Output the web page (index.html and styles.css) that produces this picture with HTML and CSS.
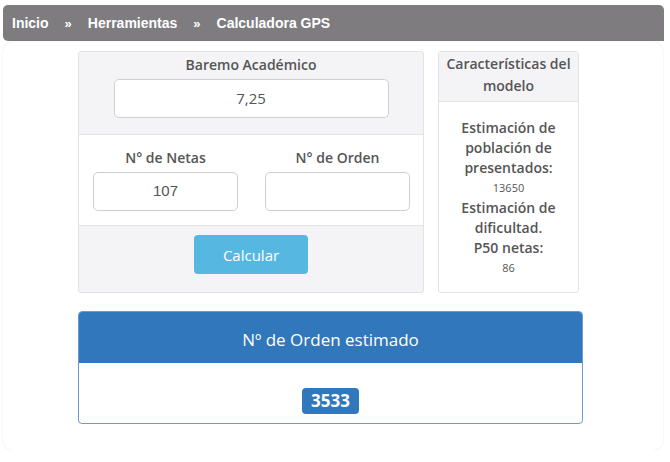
FILE: index.html
```html
<!DOCTYPE html>
<html lang="es">
<head>
<meta charset="utf-8">
<title>Calculadora GPS</title>
<link rel="stylesheet" href="styles.css">
</head>
<body>
<nav class="breadcrumb">
  <span class="crumb">Inicio</span>
  <span class="sep">»</span>
  <span class="crumb">Herramientas</span>
  <span class="sep">»</span>
  <span class="crumb">Calculadora GPS</span>
</nav>
<main class="card">
  <div class="container">
    <div class="row">
      <section class="form-panel">
        <div class="sec sec-top">
          <label class="lbl">Baremo Académico</label>
          <div class="input input-wide">7,25</div>
        </div>
        <div class="sec sec-mid">
          <div class="col">
            <label class="lbl">N° de Netas</label>
            <div class="input input-arial">107</div>
          </div>
          <div class="col">
            <label class="lbl">N° de Orden</label>
            <div class="input"></div>
          </div>
        </div>
        <div class="sec sec-bot">
          <button class="btn">Calcular</button>
        </div>
      </section>
      <aside class="model-panel">
        <div class="model-head">Características del modelo</div>
        <div class="model-body">
          <div class="mt">Estimación de población de presentados:</div>
          <div class="mv">13650</div>
          <div class="mt">Estimación de dificultad.</div>
          <div class="mt">P50 netas:</div>
          <div class="mv">86</div>
        </div>
      </aside>
    </div>
    <section class="result">
      <div class="result-head">Nº de Orden estimado</div>
      <div class="result-body"><span class="badge">3533</span></div>
    </section>
  </div>
</main>
</body>
</html>
```

FILE: styles.css
```css
* { box-sizing: border-box; }
html, body { background: #ffffff; }
body {
  margin: 0;
  font-family: "Open Sans", "Noto Sans", sans-serif;
  color: #555555;
}
.breadcrumb {
  margin: 5px 6px 0 3px;
  height: 36px;
  background: #7e7c7f;
  border-radius: 5px 5px 0 5px;
  display: flex;
  align-items: center;
  padding-left: 9px;
  font-family: "Liberation Sans", Arial, sans-serif;
  font-weight: bold;
  font-size: 14px;
  color: #ffffff;
}
.sep { margin: 0 16px; font-size: 13px; }
.card {
  margin: 1px 7px 0 3px;
  height: 408px;
  background: #ffffff;
  border-radius: 10px;
  box-shadow: 0 0 2px rgba(0,0,0,0.12);
  padding-top: 9px;
}
.container {
  width: 505px;
  margin-left: 75px;
}
.row { display: flex; gap: 14px; }
.form-panel {
  width: 346px;
  height: 242px;
  background: #f4f3f5;
  border: 1px solid #e3e2e4;
  border-radius: 3px;
  display: flex;
  flex-direction: column;
}
.sec { display: flex; }
.sec-top {
  flex-direction: column;
  align-items: center;
  padding-top: 3px;
  height: 83px;
  border-bottom: 1px solid #e3e2e4;
}
.lbl {
  display: block;
  font-size: 14px;
  font-weight: 600;
  line-height: 20px;
  color: #555555;
  text-align: center;
  margin-bottom: 4px;
}
.input {
  height: 39px;
  background: #ffffff;
  border: 1px solid #cfcfd1;
  border-radius: 5px;
  display: flex;
  align-items: center;
  justify-content: center;
  padding-bottom: 2px;
  font-size: 15px;
  color: #555555;
}
.input-wide { width: 275px; }
.input-arial { font-family: "Liberation Sans", Arial, sans-serif; font-size: 15px; }
.sec-mid {
  background: #ffffff;
  height: 91px;
  padding-top: 13px;
  border-bottom: 1px solid #e3e2e4;
}
.col { flex: 1; padding: 0 13px 0 14px; }
.sec-bot {
  flex: 1;
  justify-content: center;
  padding-top: 9px;
}
.btn {
  width: 114px;
  height: 39px;
  background: #56b8e1;
  border: none;
  border-radius: 4px;
  color: #ffffff;
  font-family: "Open Sans", sans-serif;
  font-size: 15px;
}
.model-panel {
  width: 141px;
  height: 242px;
  background: #ffffff;
  border: 1px solid #e3e2e4;
  border-radius: 3px;
  display: flex;
  flex-direction: column;
}
.model-head {
  background: #f4f3f5;
  border-bottom: 1px solid #e3e2e4;
  height: 50px;
  padding-top: 1px;
  font-size: 14px;
  font-weight: 600;
  line-height: 22px;
  text-align: center;
  color: #555555;
}
.model-body {
  padding: 16px 6px 0;
  text-align: center;
}
.mt {
  font-size: 14px;
  font-weight: 600;
  line-height: 20px;
  color: #555555;
}
.mv {
  font-size: 11px;
  line-height: 20px;
  color: #555555;
}
.result {
  margin-top: 18px;
  width: 505px;
  border: 1px solid #6a9bd0;
  border-radius: 4px;
  overflow: hidden;
}
.result-head {
  background: #3177bc;
  height: 51px;
  display: flex;
  align-items: center;
  justify-content: center;
  padding-top: 4px;
  font-size: 17px;
  color: #ffffff;
}
.result-body {
  height: 60px;
  display: flex;
  justify-content: center;
  align-items: flex-start;
  padding-top: 25px;
}
.badge {
  display: inline-block;
  background: #3177bc;
  color: #ffffff;
  font-weight: 700;
  font-size: 17px;
  line-height: 26px;
  padding: 0 9px;
  border-radius: 4px;
}
```
